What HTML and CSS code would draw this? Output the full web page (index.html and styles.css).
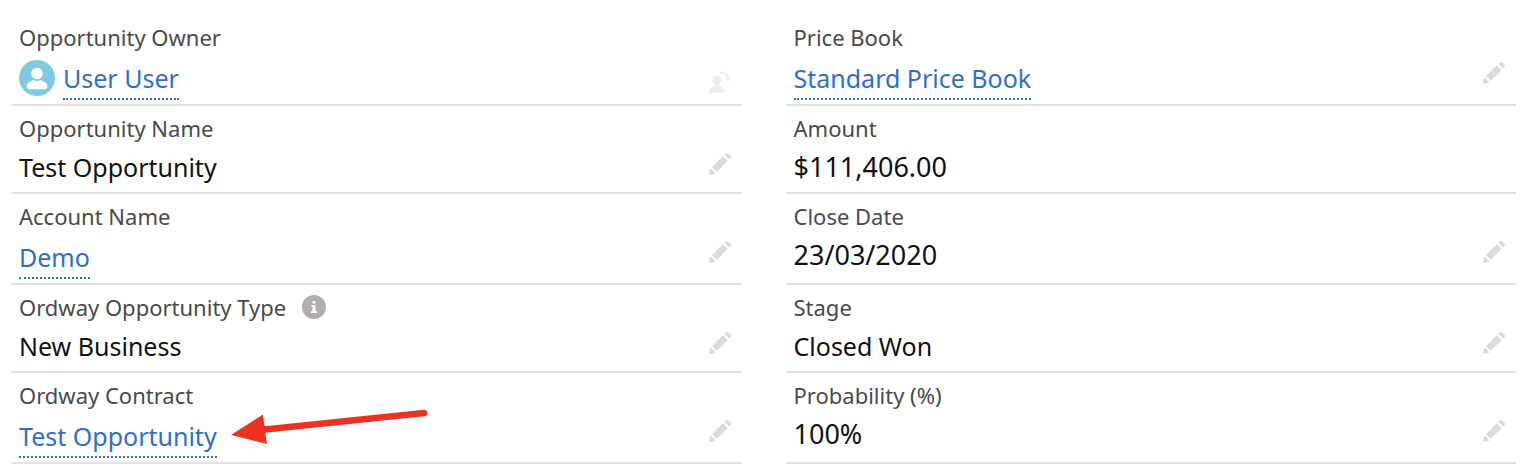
FILE: index.html
```html
<!DOCTYPE html>
<html lang="en">
<head>
<meta charset="utf-8">
<title>Opportunity details</title>
<link rel="stylesheet" href="styles.css">
</head>
<body>
<svg class="sprite" aria-hidden="true">
  <symbol id="pencil" viewBox="0 0 52 52"><path d="M9.500 33.400l8.900 8.900c.4.4 1 .4 1.400 0L42 20c.4-.4.4-1 0-1.400l-8.800-8.800c-.4-.4-1-.4-1.400 0L9.500 32.100c-.4.4-.4 1 0 1.300zM36.100 5.700c-.4.4-.4 1 0 1.400l8.800 8.800c.4.4 1 .4 1.400 0l2.500-2.500c1.600-1.500 1.600-3.900 0-5.500l-4.700-4.700c-1.600-1.600-4.100-1.600-5.700 0l-2.300 2.500zM2.100 48.200c-.2 1 .7 1.900 1.700 1.700l10.900-2.600c.4-.1.7-.3.9-.5l.2-.2c.2-.2.3-.9-.1-1.300l-9-9c-.4-.4-1.100-.3-1.300-.1l-.2.2c-.3.3-.4.6-.5.9L2.100 48.200z"/></symbol>
</svg>
<main class="details">
  <dl class="column">
    <div class="field field-link">
      <dt class="label">Opportunity Owner</dt>
      <dd class="value owner">
        <svg class="avatar" viewBox="0 0 36 36" aria-hidden="true"><circle cx="18" cy="18" r="18" fill="#7fc9e2"/><circle cx="18" cy="13.500" r="5.800" fill="#fff"/><path fill="#fff" d="M7.500 26.500c0-3.800 3.600-5.100 7-6.600 1.800 1.300 5.200 1.300 7 0 3.400 1.500 7 2.800 7 6.600 0 1.600-1.200 2.700-2.700 2.700H10.200c-1.500 0-2.700-1.100-2.700-2.700z"/></svg>
        <a class="link" href="#owner">User User</a>
      </dd>
      <dd class="action action-owner"><button class="edit edit-owner" type="button" aria-label="Change Owner"><svg class="icon" viewBox="0 0 24 24"><circle cx="9" cy="10" r="4.500"/><path d="M1 21.500c0-3.300 3-4 6-5.500v-3h4v3c3 1.500 6 2.200 6 5.500 0 1-.6 1.500-1.500 1.500h-13C1.600 23 1 22.500 1 21.500z"/><path class="turn" d="M12 2.500c5-.5 8.500 2.500 8.500 6.500M18 7.500l2.500 2.500 1.500-2.500"/></svg></button></dd>
    </div>
    <div class="field">
      <dt class="label">Opportunity Name</dt>
      <dd class="value">Test Opportunity</dd>
      <dd class="action"><button class="edit" type="button" aria-label="Edit Opportunity Name"><svg class="icon"><use href="#pencil"/></svg></button></dd>
    </div>
    <div class="field field-link">
      <dt class="label">Account Name</dt>
      <dd class="value"><a class="link" href="#account">Demo</a></dd>
      <dd class="action"><button class="edit" type="button" aria-label="Edit Account Name"><svg class="icon"><use href="#pencil"/></svg></button></dd>
    </div>
    <div class="field">
      <dt class="label">Ordway Opportunity Type
        <button class="help" type="button" aria-label="Help"><svg class="icon" viewBox="0 0 24 24"><circle cx="12" cy="12" r="12" fill="#b0adab"/><path fill="#fff" d="M10.500 6h3v2.500h-3zM9.500 10h4v6h1.500v2H9v-2h1.500v-4h-1z"/></svg></button>
      </dt>
      <dd class="value">New Business</dd>
      <dd class="action"><button class="edit" type="button" aria-label="Edit Ordway Opportunity Type"><svg class="icon"><use href="#pencil"/></svg></button></dd>
    </div>
    <div class="field field-link">
      <dt class="label">Ordway Contract</dt>
      <dd class="value"><span class="marked"><a class="link" href="#contract">Test Opportunity</a><svg class="arrow" viewBox="0 0 198 34" aria-hidden="true"><path d="M1 25L33 4.500 34.500 16.200 194 -.2Q197.500 0 197.500 3.300 197.500 6 194.500 6.300L35.300 22.800 37 34z"/></svg></span></dd>
      <dd class="action"><button class="edit" type="button" aria-label="Edit Ordway Contract"><svg class="icon"><use href="#pencil"/></svg></button></dd>
    </div>
  </dl>
  <dl class="column">
    <div class="field field-link">
      <dt class="label">Price Book</dt>
      <dd class="value"><a class="link" href="#pricebook">Standard Price Book</a></dd>
      <dd class="action"><button class="edit" type="button" aria-label="Edit Price Book"><svg class="icon"><use href="#pencil"/></svg></button></dd>
    </div>
    <div class="field">
      <dt class="label">Amount</dt>
      <dd class="value figure">$111,406.00</dd>
    </div>
    <div class="field">
      <dt class="label">Close Date</dt>
      <dd class="value figure">23/03/2020</dd>
      <dd class="action"><button class="edit" type="button" aria-label="Edit Close Date"><svg class="icon"><use href="#pencil"/></svg></button></dd>
    </div>
    <div class="field">
      <dt class="label">Stage</dt>
      <dd class="value">Closed Won</dd>
      <dd class="action"><button class="edit" type="button" aria-label="Edit Stage"><svg class="icon"><use href="#pencil"/></svg></button></dd>
    </div>
    <div class="field">
      <dt class="label">Probability (%)</dt>
      <dd class="value figure">100%</dd>
      <dd class="action"><button class="edit" type="button" aria-label="Edit Probability"><svg class="icon"><use href="#pencil"/></svg></button></dd>
    </div>
  </dl>
</main>
</body>
</html>
```
FILE: styles.css
```css
* { box-sizing: border-box; }

body {
  margin: 0;
  background: #fff;
  color: #111;
  font-family: "Noto Sans", "Open Sans", sans-serif;
}

.sprite { display: none; }

.details {
  display: grid;
  grid-template-columns: 1fr 1fr;
  grid-template-rows: repeat(5, auto);
  column-gap: 44px;
  padding: 15px 19px 8px 11px;
}

.column {
  display: grid;
  grid-row: 1 / -1;
  grid-template-rows: subgrid;
  margin: 0;
}

.field {
  display: grid;
  grid-template-columns: 1fr auto;
  grid-template-rows: 30px auto;
  row-gap: 6px;
  padding: 7px 10px 7px 8px;
  border-bottom: 2px solid #e2e2e1;
}

.field-link {
  row-gap: 8px;
  padding-bottom: 4px;
}

.label {
  grid-column: 1 / -1;
  display: flex;
  align-items: center;
  gap: 16px;
  color: #4a4a49;
  font-size: 22px;
  line-height: 30px;
}

.value {
  margin: 0;
  font-size: 25px;
  line-height: 36px;
}

.figure { font-size: 27px; }

.owner {
  display: flex;
  align-items: flex-start;
  gap: 8px;
}

.avatar {
  width: 36px;
  height: 36px;
}

.link {
  display: inline-block;
  padding-bottom: 2px;
  border-bottom: 2px dotted #2e6fcb;
  color: #2e6fcb;
  text-decoration: none;
  vertical-align: top;
}

.action {
  margin: 0;
  padding-top: 3px;
}

.field-link .action { padding-top: 1px; }

.field-link .action-owner { padding-top: 10px; }

.edit,
.help {
  display: block;
  width: 24px;
  height: 24px;
  padding: 0;
  border: 0;
  background: none;
  color: #dddbda;
  cursor: pointer;
}

.edit-owner { color: #eeedec; }

.icon {
  display: block;
  width: 100%;
  height: 100%;
  fill: currentColor;
}

.turn {
  fill: none;
  stroke: currentColor;
  stroke-width: 2;
}

.marked {
  position: relative;
  display: inline-block;
  vertical-align: top;
}

.arrow {
  position: absolute;
  top: -8px;
  left: calc(100% + 13px);
  width: 198px;
  height: 34px;
  overflow: visible;
  fill: #ec3323;
}
```
